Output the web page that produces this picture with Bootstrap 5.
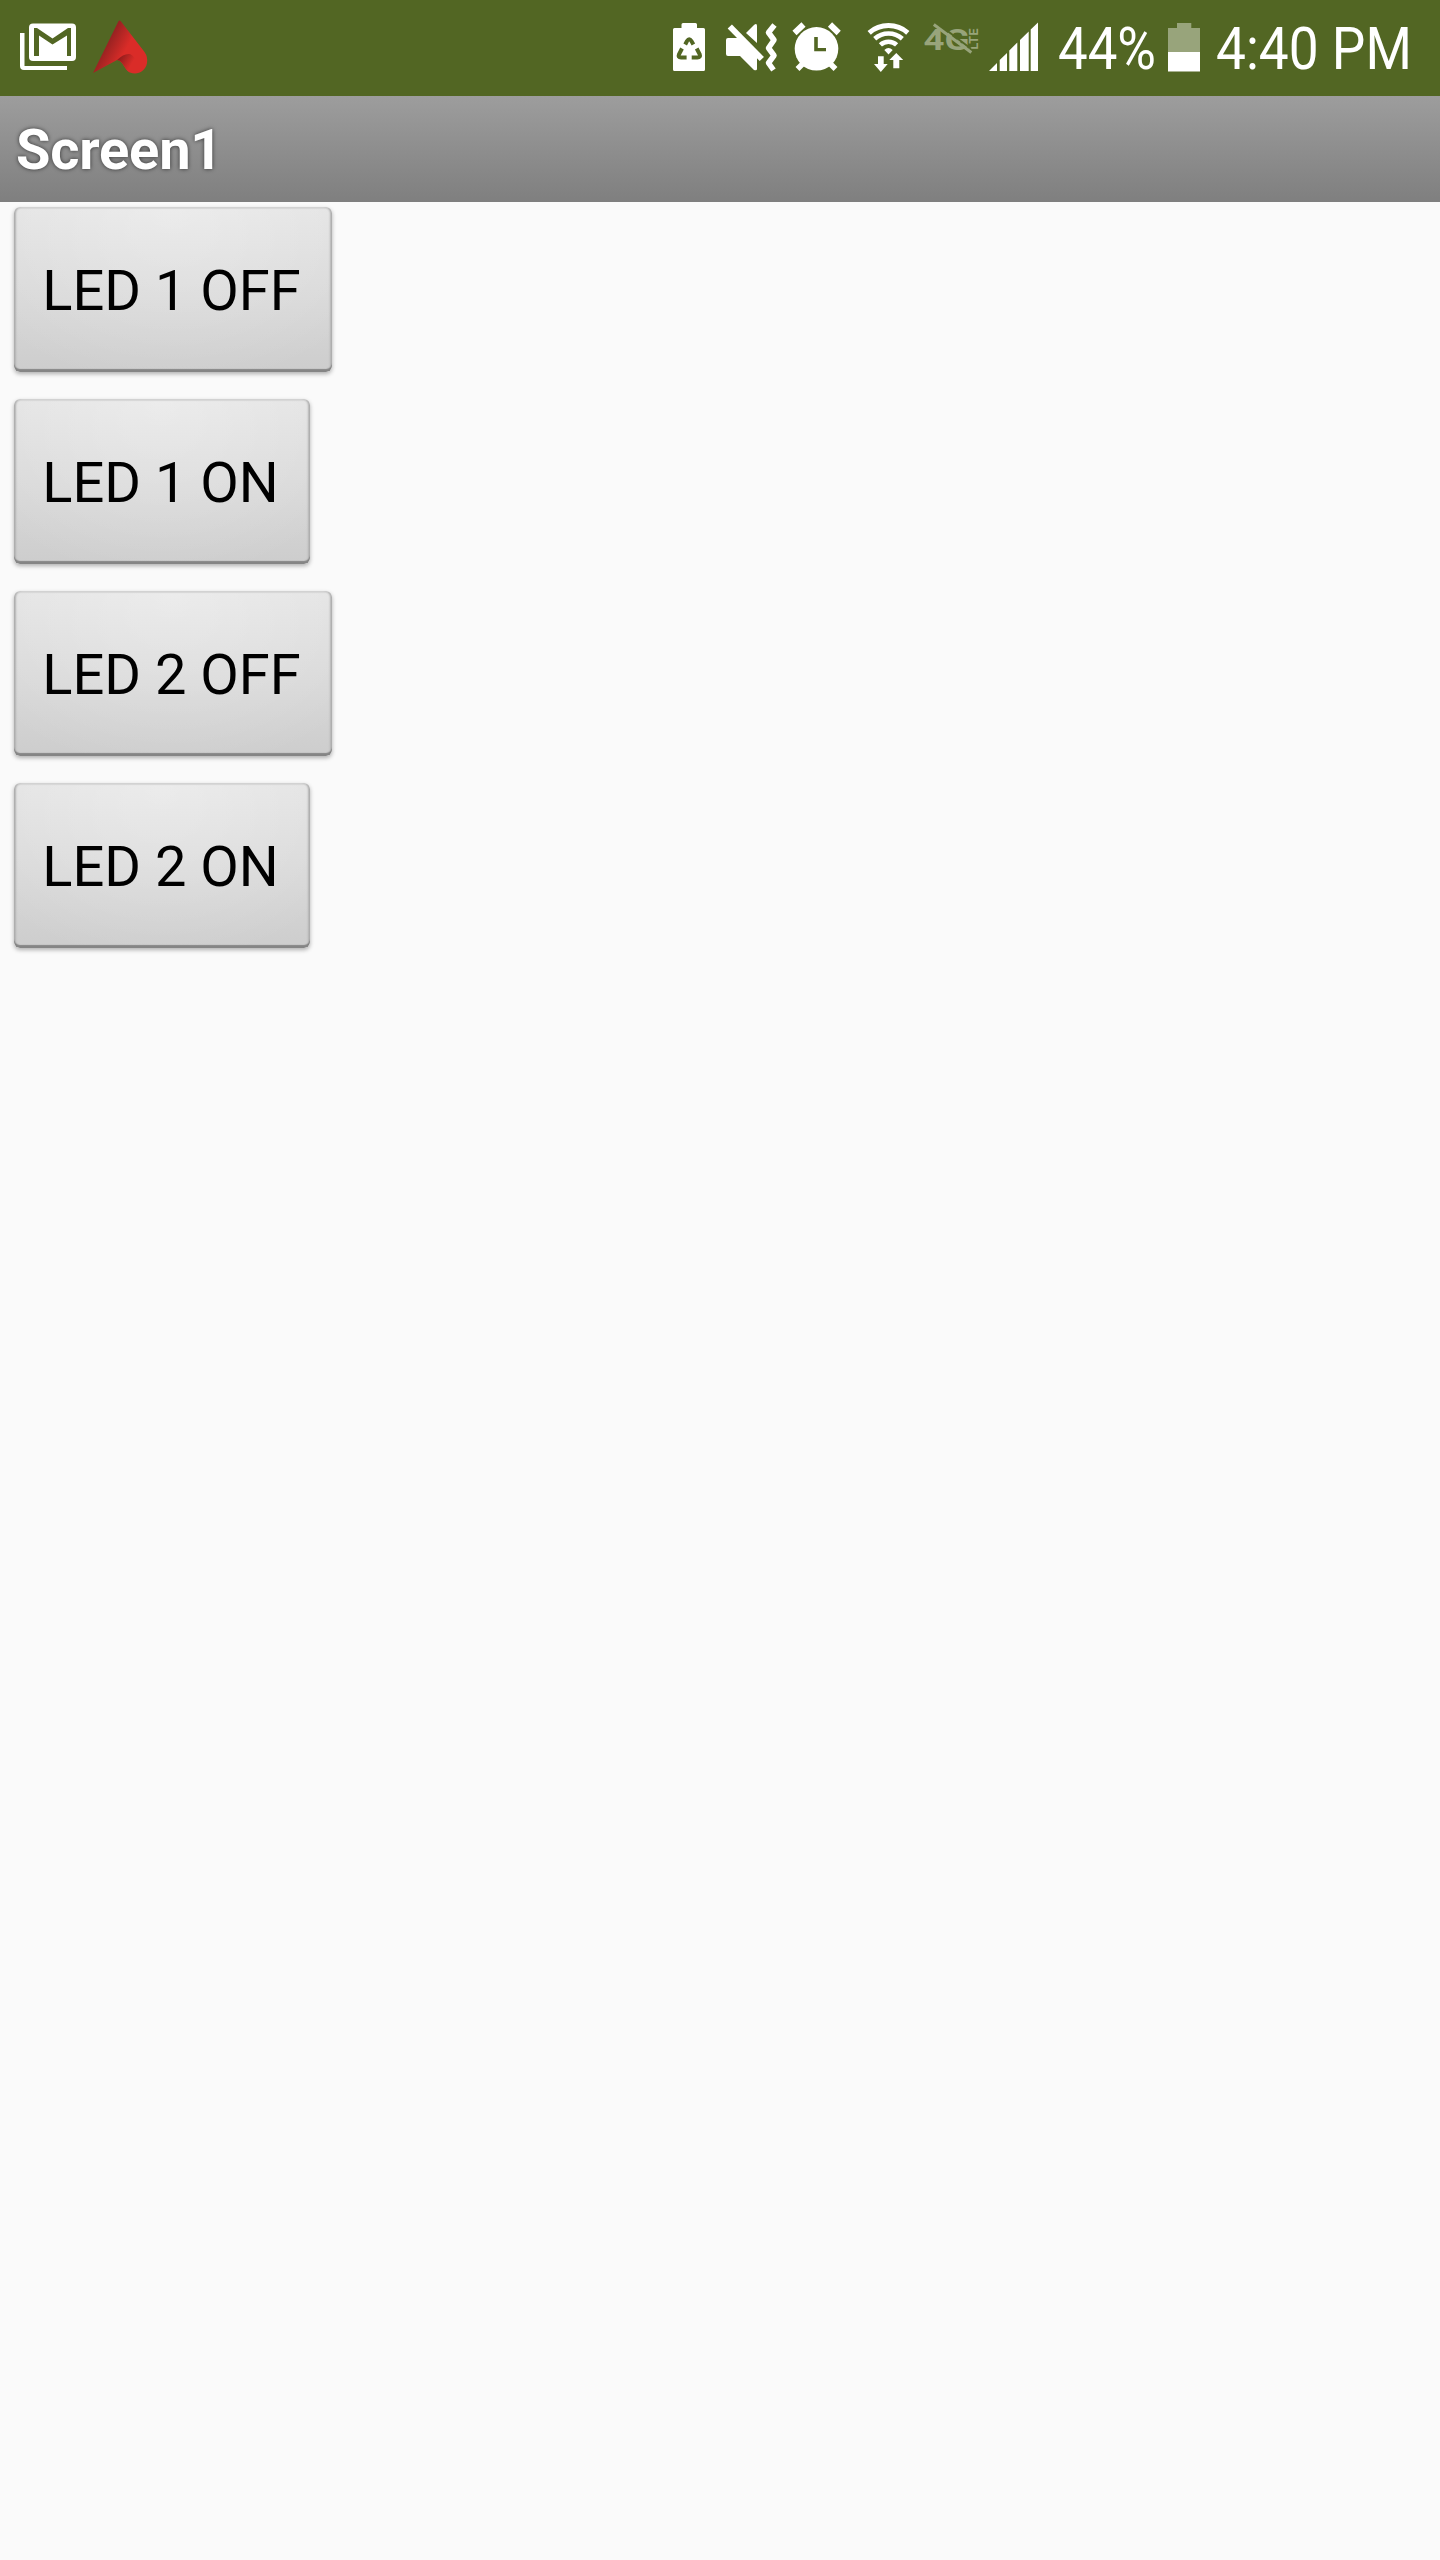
<!DOCTYPE html>
<html lang="en">
<head>
<meta charset="utf-8">
<meta name="viewport" content="width=device-width, initial-scale=1">
<title>Screen1</title>
<link href="https://cdn.jsdelivr.net/npm/bootstrap@5.3.0/dist/css/bootstrap.min.css" rel="stylesheet">
<style>
body{background:#fafafa;font-family:Roboto,"Liberation Sans",sans-serif;overflow:hidden}
.status-bar{height:96px;background:#526623;color:#fff}
.status-bar svg{height:96px;flex:none;display:block}
.status-text{height:96px;font-size:60px;line-height:98px;white-space:nowrap;flex:none}
.status-text span{display:inline-block;transform-origin:0 50%;transform:scaleX(.887)}
.level{width:108px}
.level span{transform:scaleX(.88)}
.clock{width:225px;padding-left:1px}
.title-bar{height:106px;padding:2px 0 0 16px;background:linear-gradient(#9d9d9d,#7f7f7f);color:#fff;font-size:56px;line-height:1;letter-spacing:-.2px;text-shadow:0 0 4px rgba(0,0,0,.65)}
.screen-body{height:2358px;padding:5px 0 0 14px;gap:27px}
.led-btn{height:165px;padding:3px 3px 0 0;border:0;border-radius:6px;color:#000;font-size:56px;line-height:1;
background:radial-gradient(ellipse 75% 110% at 50% 0,rgba(255,255,255,.32),rgba(255,255,255,0)),linear-gradient(#e3e3e3,#d8d8d8 55%,#cdcdcd);
box-shadow:inset 0 -3px 1px #858585,inset 3px 0 2px -1px #b2b2b2,inset -3px 0 2px -1px #b2b2b2,inset 0 2px 1px #d6d6d6,0 2px 4px rgba(0,0,0,.3)}
.led-off{width:318px}
.led-on{width:296px}
</style>
<script src="https://cdn.jsdelivr.net/npm/bootstrap@5.3.0/dist/js/bootstrap.bundle.min.js"></script>
</head>
<body>
<header class="status-bar d-flex justify-content-between">
  <div class="d-flex">
    <svg width="84" viewBox="0 0 84 96"><path d="M20 33h4.500v33H67v4H24q-4 0-4-4z" fill="#fff"/><rect x="29" y="23.500" width="47" height="37.500" rx="4" fill="#fff"/><path d="M34 56V28h3l15.500 10.500L68 28h3v28h-4V35.500l-14.500 9-13.500-9V56z" fill="#526623"/></svg>
    <svg width="80" viewBox="84 0 80 96"><defs><linearGradient id="wing" gradientUnits="userSpaceOnUse" x1="104" y1="42" x2="124" y2="53"><stop stop-color="#8c2020"/><stop offset="1" stop-color="#da2c28"/></linearGradient><linearGradient id="fold" gradientUnits="userSpaceOnUse" x1="119" y1="58" x2="131" y2="65"><stop stop-color="#8f1d1c"/><stop offset="1" stop-color="#da2c28"/></linearGradient></defs>
      <path d="M118.300 21.500Q119.500 19.500 121 21.500L144.500 52Q148 57 147 63C145 74 132 77 126 69L122 63Q120 60 117 60L93 73z" fill="url(#wing)"/><path d="M117 60Q124 53 130 54Q135 56 137 64L130 72.500Q127.500 71.500 126 69L122 63Q120 60 117 60z" fill="url(#fold)"/></svg>
  </div>
  <div class="d-flex">
    <svg width="57" viewBox="663 0 57 96"><path d="M674.500 28h7v-3.500q0-1.500 1.500-1.500h12.500q1.500 0 1.500 1.500V28h6.500q1.500 0 1.500 1.500v40q0 1.500-1.500 1.500h-29q-1.500 0-1.500-1.500v-40q0-1.500 1.500-1.500z" fill="#fff"/><g fill="none" stroke="#526623" stroke-width="4"><path d="M685.200 44.500l1.800-3.500q2.200-3.500 4.400 0l2 3.500"/><path d="M682 48.500l-3 5.800q-1.300 3.200 2 3.200h5.600"/><path d="M696.700 48.500l3 5.800q1.200 3.200-2.300 3.200h-5.700"/></g></svg>
    <svg width="66" viewBox="720 0 66 96"><path d="M746 33l8-8q3-2.500 3 1v17zM728 38h10l19 19v12q0 2-3 1l-14-14h-12q-2 0-2-2V40q0-2 2-2z" fill="#fff"/><path d="M729.800 26.500l32 32.500" stroke="#fff" stroke-width="6"/><path d="M774.500 25l-6 7.500 5.500 7.500-5.500 8 5.500 7.500-5.500 7.500 5 7" fill="none" stroke="#fff" stroke-width="5.500" stroke-linejoin="round"/></svg>
    <svg width="69" viewBox="786 0 69 96"><circle cx="816.500" cy="48.800" r="21.800" fill="#fff"/><g stroke="#fff" stroke-width="6"><path d="M794.500 33l9-8.500M830 24.500l8.700 8.500"/><path d="M797.500 69l8-8M835.500 69l-8-8" stroke-width="5.500"/></g><path d="M814.200 37h3.600v11h8.200v3.200h-11.800z" fill="#526623"/></svg>
    <svg width="60" viewBox="855 0 60 96"><g fill="none" stroke="#fff"><path d="M869.200 32.800a29.500 29.500 0 0 1 38.600 0" stroke-width="5"/><path d="M874.700 38.700a20.700 20.700 0 0 1 27.600 0" stroke-width="4.600"/><path d="M880.400 44.900a12 12 0 0 1 16.200 0" stroke-width="4.600"/></g><path d="M884.300 50q4.200-4 8.400 0l-4.200 4.500zM878 56.300h5.700V64h4l-6.900 8-6.800-8h4zM896.300 53l6.900 7h-3.900v8.300h-6V60h-4z" fill="#fff"/></svg>
    <svg width="66" viewBox="915 0 66 96"><g fill="#98a47b" font-family="Roboto,sans-serif" font-weight="700"><text x="923.500" y="49.500" font-size="30" textLength="46" lengthAdjust="spacingAndGlyphs">4G</text><text transform="translate(978 49.500) rotate(-90)" font-size="12.500" textLength="21" lengthAdjust="spacing">LTE</text></g><path d="M936 22.300l35 26.500" stroke="#526623" stroke-width="2"/><path d="M933.800 24.500l37.500 28" stroke="#98a47b" stroke-width="3"/></svg>
    <svg width="77" viewBox="981 0 77 96"><path d="M989 71l8-8v8zM999.700 60l7.300-7v18h-7.300zM1009.300 50.500l8-8V71h-8zM1020 40l8.700-8.500V71H1020zM1030.700 29.500l7.300-7V71h-7.300z" fill="#fff"/></svg>
    <div class="status-text level"><span>44%</span></div>
    <svg width="49" viewBox="1166 0 49 96"><path d="M1177 23h14.300v5h8.700v24h-32V28h9z" fill="#98a47b"/><path d="M1168 52h32v19.500h-32z" fill="#fff"/></svg>
    <div class="status-text clock"><span>4:40 PM</span></div>
  </div>
</header>
<div class="title-bar d-flex align-items-center fw-bold">Screen1</div>
<main class="screen-body d-flex flex-column align-items-start">
  <button type="button" class="btn led-btn led-off">LED 1 OFF</button>
  <button type="button" class="btn led-btn led-on">LED 1 ON</button>
  <button type="button" class="btn led-btn led-off">LED 2 OFF</button>
  <button type="button" class="btn led-btn led-on">LED 2 ON</button>
</main>
</body>
</html>
